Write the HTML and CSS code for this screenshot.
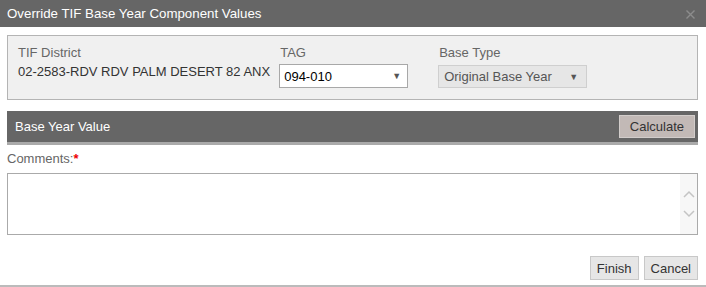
FILE: index.html
```html
<!DOCTYPE html>
<html lang="en">
<head>
    <title>Override TIF Base Year Component Values</title>
    <link rel="stylesheet" href="styles.css">
</head>
<body>
    <div class="dialogo">
        <div class="titulo">
            <span>Override TIF Base Year Component Values</span>
            <svg class="cerrar" width="9" height="9" viewBox="0 0 9 9"><path d="M0.5 0.5 L8.5 8.5 M8.5 0.5 L0.5 8.5" stroke="#8c8c8c" stroke-width="1.4"/></svg>
        </div>
        <div class="contenido">
            <div class="panel">
                <div class="campo">
                    <div class="etiqueta">TIF District</div>
                    <div class="valor">02-2583-RDV RDV PALM DESERT 82 ANX</div>
                </div>
                <div class="campo campo-tag">
                    <div class="etiqueta">TAG</div>
                    <div class="selector selector-tag">
                        <span>094-010</span>
                        <span class="flecha">&#9660;</span>
                    </div>
                </div>
                <div class="campo">
                    <div class="etiqueta">Base Type</div>
                    <div class="selector selector-base">
                        <span>Original Base Year</span>
                        <span class="flecha">&#9660;</span>
                    </div>
                </div>
            </div>
            <div class="cabecera">
                <span>Base Year Value</span>
                <button class="boton-calcular">Calculate</button>
            </div>
            <div class="comentarios">Comments:<span class="requerido">*</span></div>
            <div class="area-texto">
                <div class="barra">
                    <svg width="12" height="8" viewBox="0 0 12 8"><path d="M1 7 L6 2 L11 7" fill="none" stroke="#c4c4c4" stroke-width="1.5"/></svg>
                    <svg width="12" height="8" viewBox="0 0 12 8"><path d="M1 1 L6 6 L11 1" fill="none" stroke="#c4c4c4" stroke-width="1.5"/></svg>
                </div>
            </div>
            <div class="acciones">
                <button class="boton">Finish</button>
                <button class="boton">Cancel</button>
            </div>
        </div>
        <div class="pie"></div>
    </div>
</body>
</html>
```

FILE: styles.css
```css
body {
    margin: 0;
    padding: 0;
    background-color: #fff;
    font-family: "Liberation Sans", Arial, sans-serif;
    font-size: 13px;
    color: #333;
}
.dialogo {
    width: 706px;
}
.titulo {
    display: flex;
    justify-content: space-between;
    align-items: center;
    height: 27px;
    padding: 0 11px 0 7px;
    background-color: #666;
    color: #fff;
    font-size: 13.3px;
}
.cerrar {
    margin-top: 2px;
}
.contenido {
    padding: 8px 7px 0 7px;
    margin-right: 1px;
}
.panel {
    display: flex;
    padding: 9px 10px 0 10px;
    background-color: #f0f0f0;
    border: 1px solid #b4b4b4;
    box-sizing: border-box;
    height: 65px;
}
.campo {
    margin-right: 10px;
}
.campo-tag {
    margin-right: 31px;
}
.etiqueta {
    color: #666;
    height: 19px;
}
.valor {
    color: #333;
}
.selector {
    display: flex;
    justify-content: space-between;
    align-items: center;
    height: 24px;
    box-sizing: border-box;
    padding: 0 6px 0 4px;
    font-size: 13px;
    color: #000;
}
.selector-tag {
    width: 129px;
    background-color: #fff;
    border: 1px solid #a8a8a8;
    margin-left: -1px;
}
.selector-base {
    width: 149px;
    height: 23px;
    margin-top: 1px;
    margin-left: -1px;
    background-color: #e6e6e6;
    border: 1px solid #cfcfcf;
    color: #555;
    padding-left: 5px;
    padding-right: 8px;
}
.flecha {
    font-size: 9px;
    color: #555;
}
.cabecera {
    display: flex;
    justify-content: space-between;
    align-items: center;
    height: 31px;
    margin-top: 11px;
    padding: 0 3px 0 8px;
    background-color: #666;
    border-bottom: 3px solid #aaa;
    color: #fff;
}
.boton-calcular {
    height: 23px;
    padding: 0 10px;
    background-color: #c2b9b6;
    border: 1px solid #d2cdcb;
    color: #333;
    font-family: inherit;
    font-size: 13px;
}
.comentarios {
    margin-top: 6px;
    color: #666;
    height: 22px;
}
.requerido {
    color: #e00;
    font-weight: bold;
}
.area-texto {
    display: flex;
    justify-content: flex-end;
    height: 62px;
    border: 1px solid #aaa;
    box-sizing: border-box;
    background-color: #fff;
}
.barra {
    display: flex;
    flex-direction: column;
    justify-content: center;
    align-items: center;
    gap: 12px;
    width: 17px;
    background-color: #f7f7f7;
}
.acciones {
    display: flex;
    justify-content: flex-end;
    gap: 5px;
    margin-top: 21px;
}
.boton {
    height: 24px;
    padding: 0 6px;
    background-color: #e6e6e6;
    border: 1px solid #c8c8c8;
    color: #333;
    font-family: inherit;
    font-size: 13px;
}
.pie {
    margin-top: 5px;
    height: 2px;
    background-color: #bbb;
}
```
